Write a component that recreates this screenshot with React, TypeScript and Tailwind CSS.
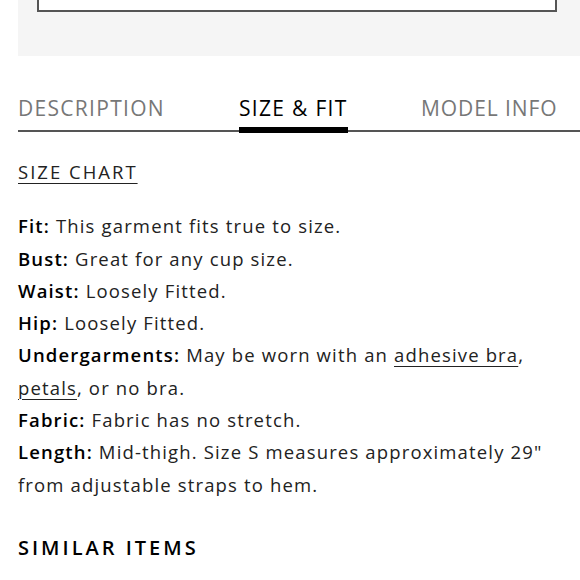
import React from "react";

export default function App() {
  const font = { fontFamily: "'Open Sans', Lato, sans-serif" };
  return (
    <div className="w-[580px] h-[580px] overflow-hidden bg-white pl-[18px]" style={font}>
      <div className="h-[56px] bg-[#f5f5f5] pl-[19px] pr-[23px]">
        <div className="h-[12px] border-x-2 border-b-2 border-[#555] bg-white" />
      </div>
      <div className="mt-[40px] relative flex items-end h-[36px] border-b-2 border-[#555] text-[21px] tracking-[1.3px] leading-none font-medium">
        <div className="w-[221px] pb-[11px] text-[#777]">DESCRIPTION</div>
        <div className="relative w-[182px] pb-[11px] text-black">
          SIZE &amp; FIT
          <div className="absolute left-0 w-[109px] -bottom-[3px] h-[6px] bg-black" />
        </div>
        <div className="pb-[11px] text-[#777] tracking-[0.9px]">MODEL INFO</div>
      </div>
      <div className="pr-[10px] text-[18.5px] text-[#222] leading-[32.3px] tracking-[1.15px]">
        <div className="mt-[24px] underline underline-offset-[4px] decoration-1 tracking-[2px]">SIZE CHART</div>
        <div className="mt-[22px]">
          <p><b className="font-semibold text-black">Fit:</b> This garment fits true to size.</p>
          <p><b className="font-semibold text-black">Bust:</b> Great for any cup size.</p>
          <p><b className="font-semibold text-black">Waist:</b> Loosely Fitted.</p>
          <p><b className="font-semibold text-black">Hip:</b> Loosely Fitted.</p>
          <p>
            <b className="font-semibold text-black">Undergarments:</b> May be worn with an{" "}
            <span className="underline underline-offset-[4px] decoration-1">adhesive bra</span>,{" "}
            <span className="underline underline-offset-[4px] decoration-1">petals</span>, or no bra.
          </p>
          <p><b className="font-semibold text-black">Fabric:</b> Fabric has no stretch.</p>
          <p>
            <b className="font-semibold text-black">Length:</b> Mid-thigh. Size S measures approximately 29" from adjustable straps to hem.
          </p>
        </div>
        <div className="mt-[31px] text-[20px] font-semibold tracking-[3px] text-black">SIMILAR ITEMS</div>
      </div>
    </div>
  );
}
